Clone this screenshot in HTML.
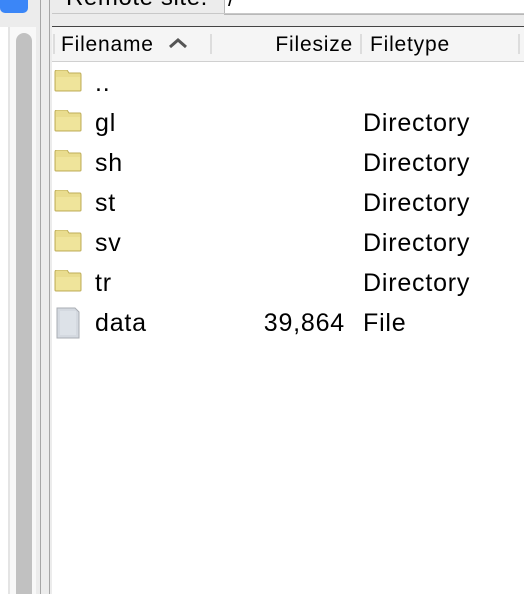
<!DOCTYPE html>
<html style="overflow:hidden;height:594px"><head><style>
body{margin:0;width:524px;height:594px;overflow:hidden;background:#fff;position:relative;font-family:"Liberation Sans",Helvetica,sans-serif}
.a{position:absolute}
.row{position:absolute;left:0;width:524px;height:40px;font-size:25px;letter-spacing:0.8px;color:#000}
.row span{position:absolute;top:5px}
.h{font-size:21px;letter-spacing:0.8px;top:33px}
</style></head><body>
<div class="a" style="left:0;top:0;width:524px;height:27px;background:#ececec"></div>
<div class="a" style="left:0;top:-8px;width:28px;height:21px;background:#3b86f7;border-radius:5px"></div>
<div class="a" style="left:66px;top:-16px;font-size:24px;letter-spacing:0.6px;color:#000">Remote site:</div>
<div class="a" style="left:224px;top:-6px;width:310px;height:19px;background:#fff;border:1px solid #b8b8b8"></div>
<div class="a" style="left:228px;top:-14px;font-size:22px">/</div>
<div class="a" style="left:52px;top:13px;width:472px;height:1px;background:#c8c8c8"></div>
<div class="a" style="left:52px;top:26px;width:472px;height:1px;background:#444"></div>
<!-- left strip -->
<div class="a" style="left:0;top:27px;width:8px;height:567px;background:#fff"></div>
<div class="a" style="left:8px;top:27px;width:2px;height:567px;background:#e4e4e4"></div>
<div class="a" style="left:10px;top:27px;width:26px;height:567px;background:#f8f8f8"></div>
<div class="a" style="left:16px;top:33px;width:16px;height:561px;background:#c1c1c1;border-radius:8px 8px 0 0"></div>
<div class="a" style="left:36px;top:0;width:4px;height:594px;background:#ececec"></div>
<div class="a" style="left:40px;top:0;width:1px;height:594px;background:#a6a6a6"></div>
<div class="a" style="left:41px;top:0;width:8px;height:594px;background:#ececec"></div>
<div class="a" style="left:49px;top:0;width:1px;height:594px;background:#a6a6a6"></div>
<div class="a" style="left:50px;top:27px;width:2px;height:567px;background:#ececec"></div>
<!-- header -->
<div class="a" style="left:52px;top:27px;width:472px;height:34px;background:#f5f5f5;border-bottom:1px solid #d0d0d0"></div>
<div class="a" style="left:53px;top:34px;width:2px;height:20px;background:#ddd"></div>
<div class="a" style="left:210px;top:34px;width:2px;height:20px;background:#ddd"></div>
<div class="a" style="left:360px;top:34px;width:2px;height:20px;background:#ddd"></div>
<div class="a" style="left:518px;top:34px;width:2px;height:20px;background:#ddd"></div>
<div class="a h" style="left:61px">Filename</div>
<svg class="a" style="left:167px;top:37px" width="22" height="12"><path d="M3 10 L11 3 L19 10" fill="none" stroke="#555" stroke-width="3"/></svg>
<div class="a h" style="right:171px">Filesize</div>
<div class="a h" style="left:370px">Filetype</div>
<svg width="0" height="0" style="position:absolute"><defs><symbol id="f" viewBox="0 0 28 22"><path d="M1 2 Q1 0 3 0 H13 L15 3 H26 Q27 3 27 5 V20 Q27 21 26 21 H2 Q1 21 1 20 Z" fill="#e9dc8e" stroke="#bfae5a"/><rect x="2" y="7" width="24" height="13" fill="#efe49b"/></symbol></defs></svg>
<div class="row" style="top:64px"><svg class="a" style="left:54px;top:6px" width="28" height="22"><use href="#f"/></svg><span style="left:95px">..</span></div>
<div class="row" style="top:104px"><svg class="a" style="left:54px;top:6px" width="28" height="22"><use href="#f"/></svg><span style="left:95px">gl</span><span style="left:363px">Directory</span></div>
<div class="row" style="top:144px"><svg class="a" style="left:54px;top:6px" width="28" height="22"><use href="#f"/></svg><span style="left:95px">sh</span><span style="left:363px">Directory</span></div>
<div class="row" style="top:184px"><svg class="a" style="left:54px;top:6px" width="28" height="22"><use href="#f"/></svg><span style="left:95px">st</span><span style="left:363px">Directory</span></div>
<div class="row" style="top:224px"><svg class="a" style="left:54px;top:6px" width="28" height="22"><use href="#f"/></svg><span style="left:95px">sv</span><span style="left:363px">Directory</span></div>
<div class="row" style="top:264px"><svg class="a" style="left:54px;top:6px" width="28" height="22"><use href="#f"/></svg><span style="left:95px">tr</span><span style="left:363px">Directory</span></div>
<div class="row" style="top:304px"><svg class="a" style="left:56px;top:3px" width="24" height="32"><path d="M1 1 H19 L23 5 V31 H1 Z" fill="#d4d9e0" stroke="#a9adb3"/><rect x="4" y="4" width="16" height="24" fill="#dde2e8"/></svg><span style="left:95px">data</span><span style="right:179px">39,864</span><span style="left:363px">File</span></div>
</body></html>
